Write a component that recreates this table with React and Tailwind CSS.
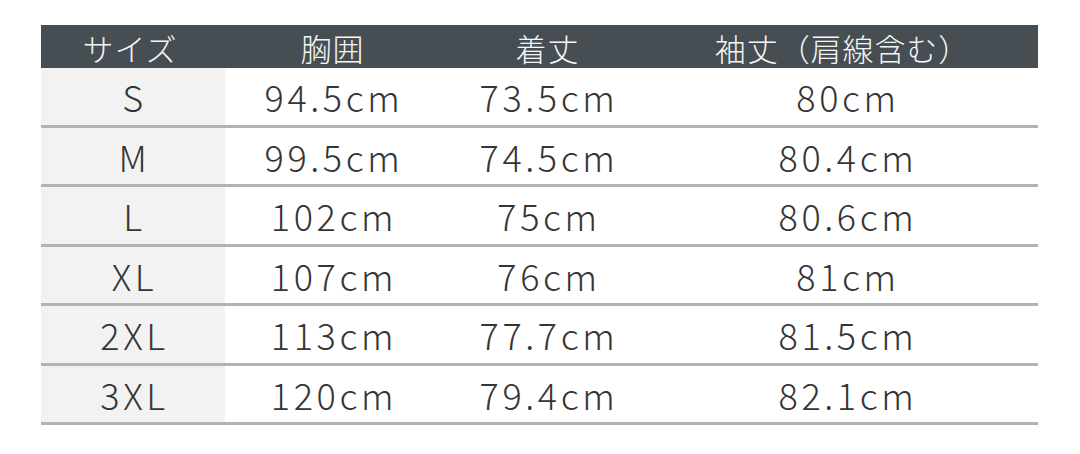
const rows = [
  ['S', '94.5cm', '73.5cm', '80cm'],
  ['M', '99.5cm', '74.5cm', '80.4cm'],
  ['L', '102cm', '75cm', '80.6cm'],
  ['XL', '107cm', '76cm', '81cm'],
  ['2XL', '113cm', '77.7cm', '81.5cm'],
  ['3XL', '120cm', '79.4cm', '82.1cm'],
];

const font = { fontFamily: '"Noto Sans CJK JP", "Noto Sans", sans-serif' };

export default function App() {
  return (
    <div className="w-[1080px] h-[454px] bg-white pt-[25px] pl-[41px]" style={font}>
      <div className="w-[997px]">
        {/* header */}
        <div className="grid grid-cols-[184px_215px_215px_383px] h-[43px] bg-[#464d53] text-[#f4f5f5] text-[31px] font-light items-center tracking-[0.03em]">
          <div className="text-center pr-[6px]">サイズ</div>
          <div className="text-center">胸囲</div>
          <div className="text-center">着丈</div>
          <div className="text-center pr-[8px]">袖丈（肩線含む）</div>
        </div>
        {rows.map((r) => (
          <div
            key={r[0]}
            className="grid grid-cols-[184px_215px_215px_383px] h-[59.5px] border-b-[3px] border-[#b3b3b3] text-[36px] text-[#353535] font-light tracking-[0.1em]"
          >
            <div className="bg-[#f2f2f2] flex items-center justify-center pl-[3px]">{r[0]}</div>
            <div className="flex items-center justify-center pl-[3px]">{r[1]}</div>
            <div className="flex items-center justify-center pl-[3px]">{r[2]}</div>
            <div className="flex items-center justify-center pl-[3px]">{r[3]}</div>
          </div>
        ))}
      </div>
    </div>
  );
}
